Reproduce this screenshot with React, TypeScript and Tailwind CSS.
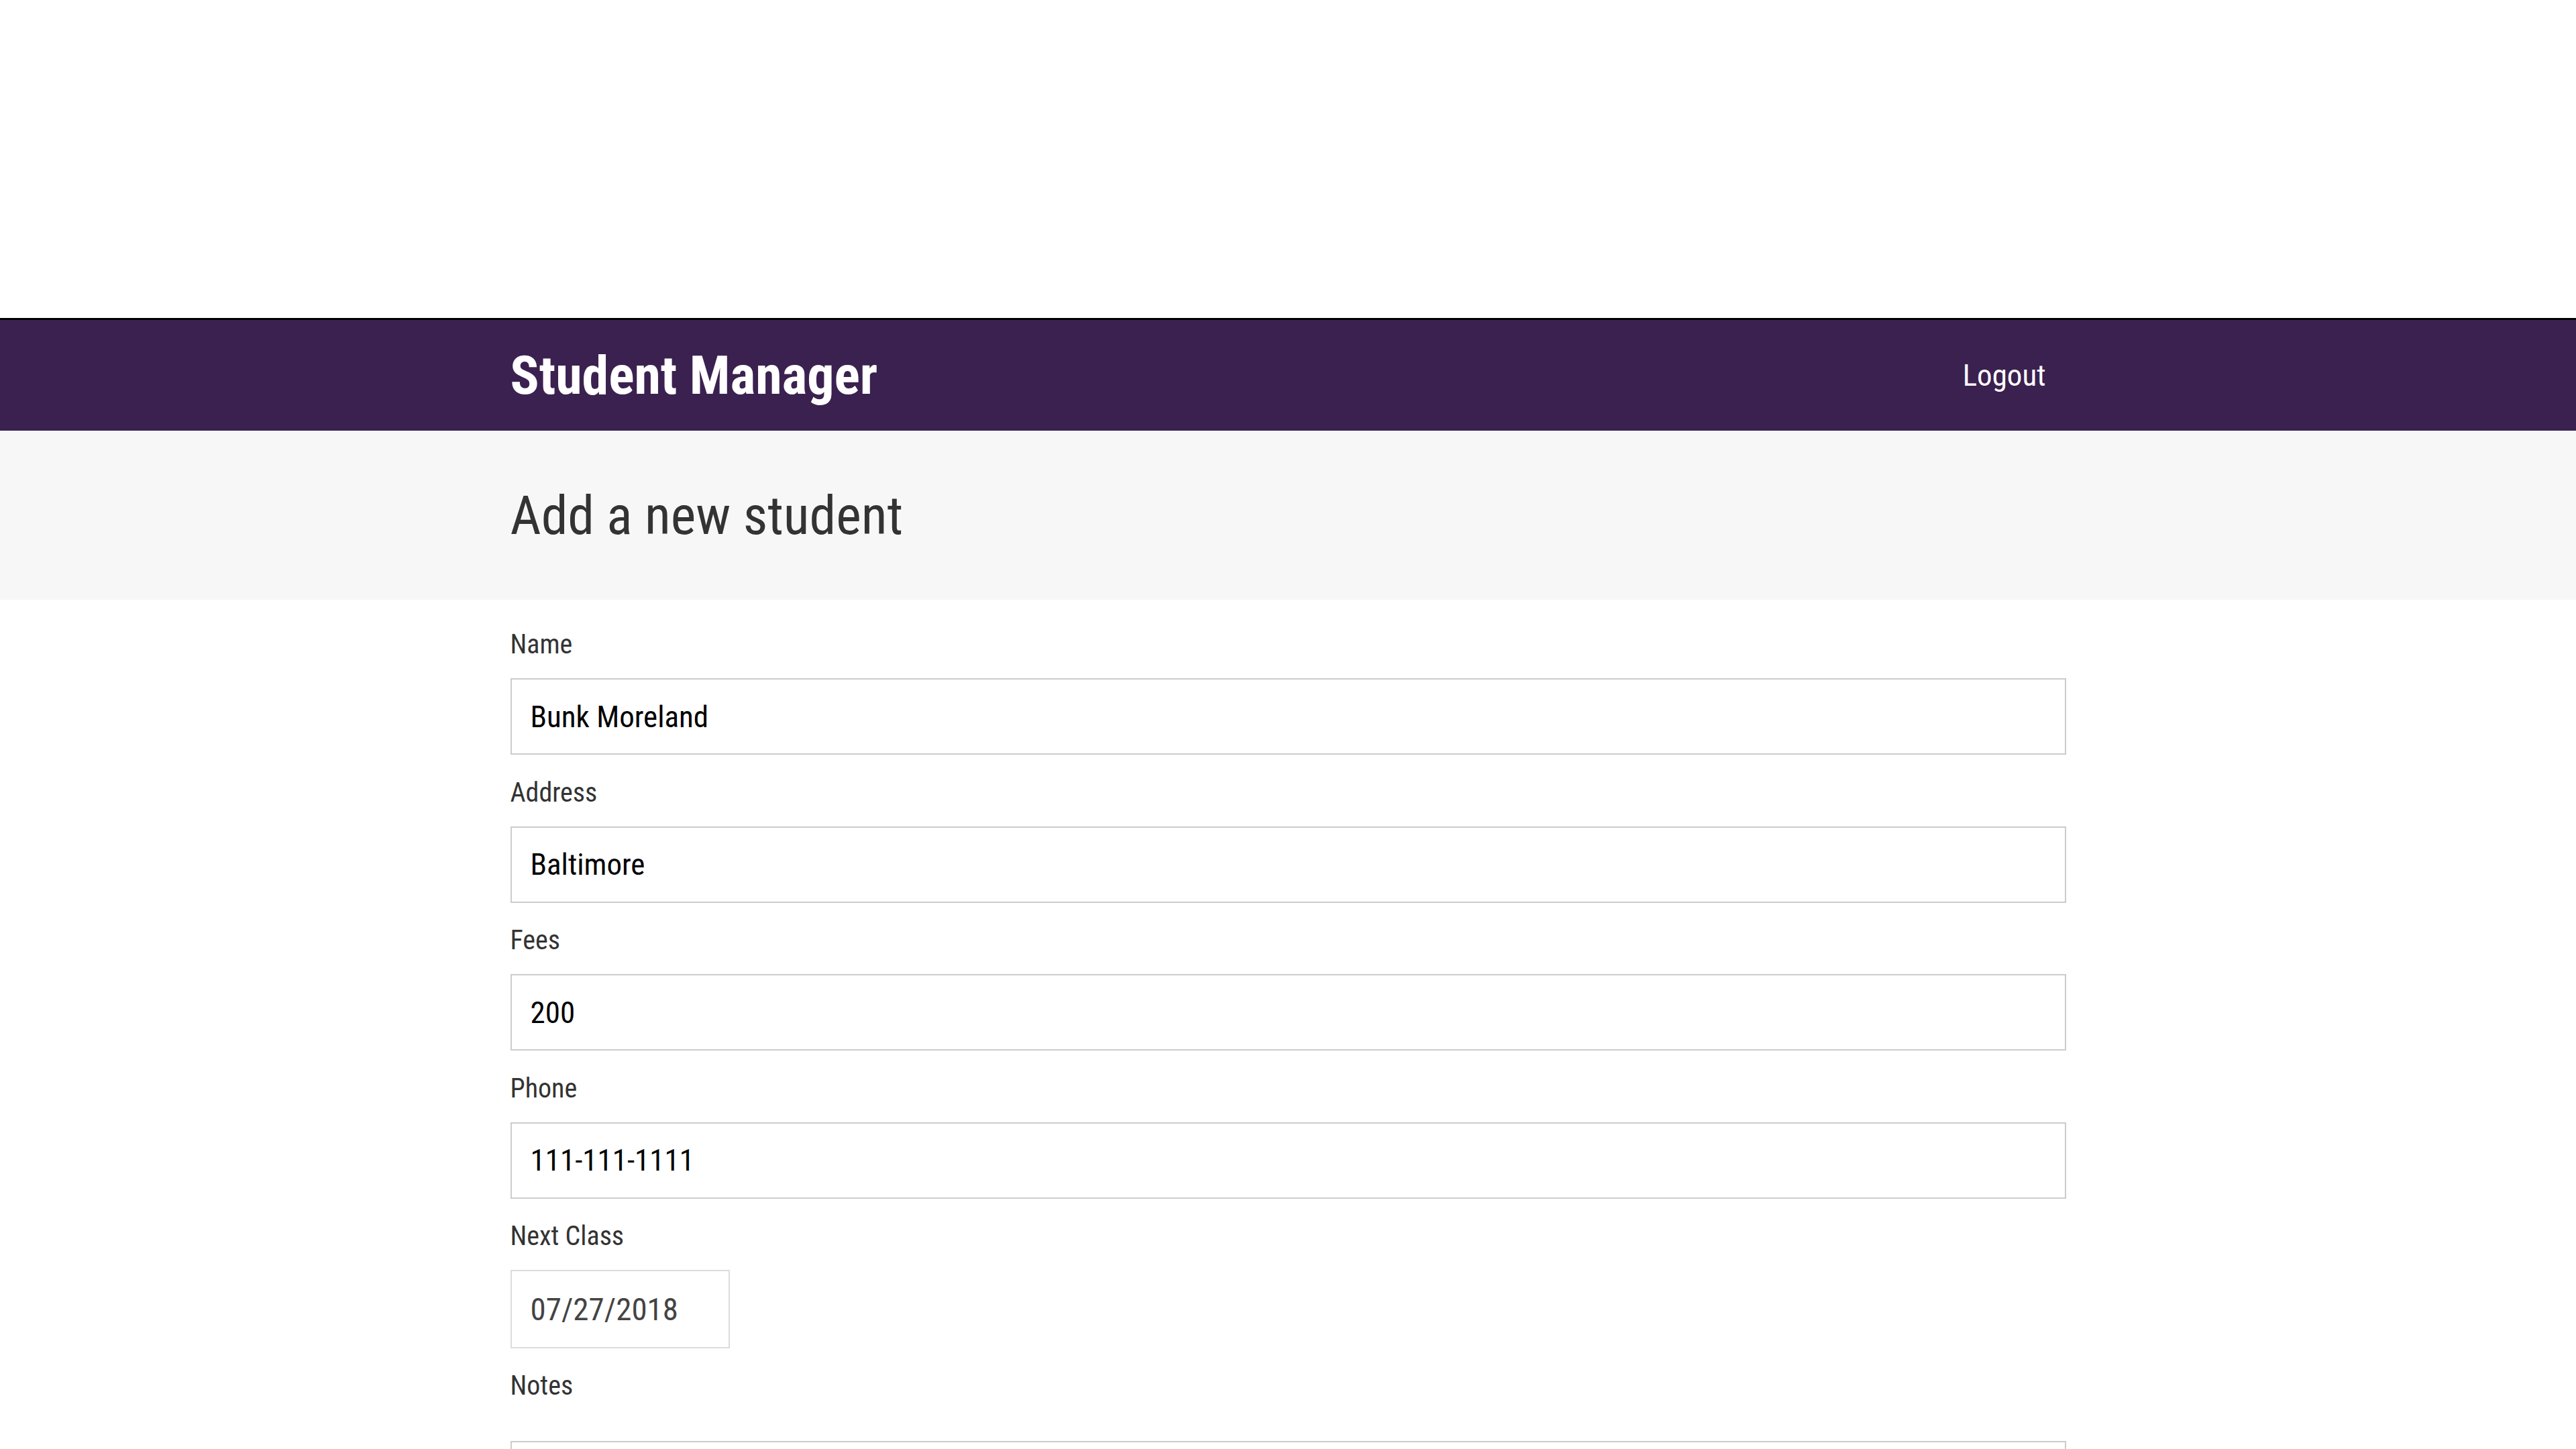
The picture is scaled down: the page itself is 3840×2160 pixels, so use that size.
import React from 'react';

const fields = [
  { label: 'Name', value: 'Bunk Moreland' },
  { label: 'Address', value: 'Baltimore' },
  { label: 'Fees', value: '200' },
  { label: 'Phone', value: '111-111-1111' },
];

const font = "font-['Roboto_Condensed',Roboto,sans-serif] [font-stretch:condensed]";

const App: React.FC = () => {
  return (
    <div className={`min-h-screen bg-white ${font}`}>
      {/* empty area above the nav */}
      <div className="h-[474px]" />

      <nav className="bg-[#3b2150] border-t-[3px] border-black">
        <div className="w-[2319px] mx-auto h-[165px] flex items-center justify-between">
          <span className="text-white font-bold text-[80px] leading-none">Student Manager</span>
          <a className="text-white text-[45px] leading-none pl-[32px] pr-[30px]">Logout</a>
        </div>
      </nav>

      <header className="bg-[#f7f7f7]">
        <div className="w-[2319px] mx-auto pt-[78px] pb-[76px]">
          <h1 className="text-[80px] leading-[98px] text-[#333]">Add a new student</h1>
        </div>
      </header>

      <form className="w-[2319px] mx-auto pt-[43px]">
        {fields.map((f) => (
          <div key={f.label} className="mb-[32.6px]">
            <label className="block text-[40px] leading-[48px] text-[#333] mb-[26px]">{f.label}</label>
            <input
              type="text"
              defaultValue={f.value}
              className="block w-full h-[114px] border-2 border-[#cccccc] px-[28px] text-[45px] text-black outline-none bg-white"
            />
          </div>
        ))}

        <div className="mb-[32px]">
          <label className="block text-[40px] leading-[48px] text-[#333] mb-[26px]">Next Class</label>
          <input
            type="text"
            defaultValue="07/27/2018"
            className="block w-[327px] h-[117px] border-2 border-[#dcdcdc] px-[28px] text-[47px] text-[#444] outline-none bg-white"
          />
        </div>

        <div className="mb-[32px]">
          <label className="block text-[40px] leading-[48px] text-[#333] mb-[58px]">Notes</label>
          <textarea className="block w-full h-[240px] border-2 border-[#cccccc] px-[28px] text-[45px] outline-none bg-white" />
        </div>
      </form>
    </div>
  );
};

export default App;
